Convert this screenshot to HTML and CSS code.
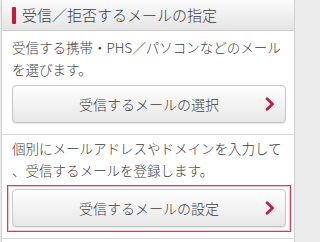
FILE: index.html
```html
<!DOCTYPE html>
<html lang="ja">
<head>
<meta charset="utf-8">
<link rel="stylesheet" href="styles.css">
</head>
<body>
<div class="page">
  <div class="header">
    <span class="mark"></span>
    <h1 class="title">受信／拒否するメールの指定</h1>
  </div>
  <div class="section">
    <p class="desc">受信する携帯・PHS／パソコンなどのメール<br>を選びます。</p>
    <a class="btn" href="#">
      <span class="btn-label">受信するメールの選択</span>
      <svg class="chev" width="10" height="14" viewBox="0 0 10 14"><path d="M2 1.8 L7.6 7 L2 12.2" fill="none" stroke="#c21d4c" stroke-width="2.8" stroke-linecap="round" stroke-linejoin="round"/></svg>
    </a>
  </div>
  <div class="section">
    <p class="desc">個別にメールアドレスやドメインを入力して<br>、受信するメールを登録します。</p>
    <div class="focus">
      <a class="btn" href="#">
        <span class="btn-label">受信するメールの設定</span>
        <svg class="chev" width="10" height="14" viewBox="0 0 10 14"><path d="M2 1.8 L7.6 7 L2 12.2" fill="none" stroke="#c21d4c" stroke-width="2.8" stroke-linecap="round" stroke-linejoin="round"/></svg>
      </a>
    </div>
  </div>
</div>
</body>
</html>
```
FILE: styles.css
```css
html, body {
  margin: 0;
  padding: 0;
}
body {
  background: #ececec;
  font-family: "Noto Sans CJK JP", "Noto Sans", sans-serif;
  color: #3c3c3c;
  padding-left: 1px;
}
.page {
  width: 292px;
  background: #fff;
  border-left: 1px solid #cfcfcf;
  border-right: 1px solid #cfcfcf;
  min-height: 242px;
}
.header {
  height: 30px;
  border-bottom: 1px solid #cfcfcf;
  background: linear-gradient(#fbfbfb, #e4e4e4);
  display: flex;
  align-items: center;
  padding-left: 10px;
}
.mark {
  width: 4px;
  height: 17px;
  background: #d0143c;
  border-radius: 1px;
  margin-right: 6px;
}
.title {
  margin: 0;
  font-size: 15px;
  font-weight: 300;
  color: #3c3c3c;
  line-height: 20px;
}
.section {
  padding: 5px 8px 11px 10px;
  border-bottom: 1px solid #dadada;
}
.section + .section {
  padding-top: 2px;
  padding-bottom: 6px;
}
.desc {
  margin: 0;
  font-size: 13.5px;
  font-weight: 300;
  line-height: 22px;
  color: #3c3c3c;
}
.btn {
  margin-top: 5px;
  height: 36px;
  display: flex;
  align-items: center;
  justify-content: center;
  position: relative;
  border: 1px solid #c6c6c6;
  border-radius: 4px;
  background: linear-gradient(#ffffff, #e7e7e7);
  box-shadow: 0 1px 1px rgba(0,0,0,0.12);
  text-decoration: none;
  color: #3c3c3c;
}
.btn-label {
  font-size: 14px;
  font-weight: 300;
}
.chev {
  position: absolute;
  right: 10px;
  top: 11px;
}
.focus {
  margin: 4px -5px 0 -5px;
  padding: 3px 4px 4px 4px;
  border: 1px solid #e0384e;
  box-shadow: inset 0 0 0 1px #f6c4ca;
}
.focus .btn {
  margin-top: 0;
}
```
